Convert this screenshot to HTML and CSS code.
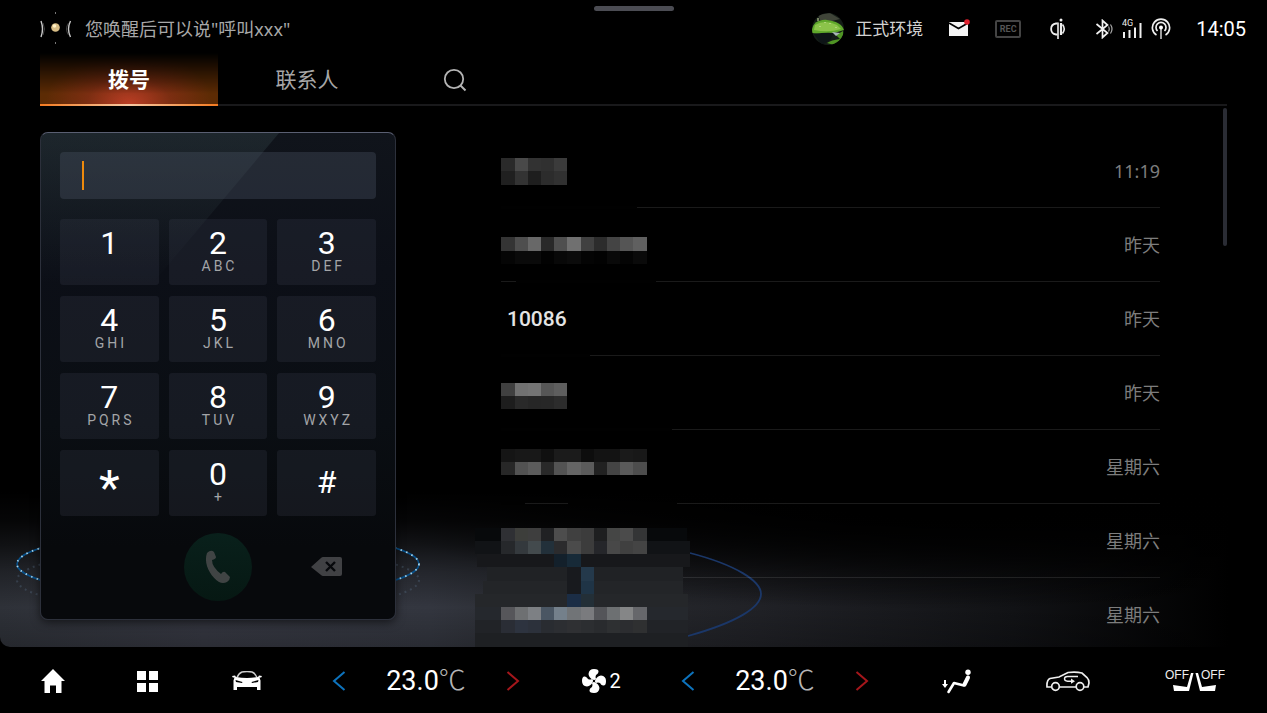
FILE: index.html
```html
<!DOCTYPE html>
<html lang="zh-CN">
<head>
<meta charset="utf-8">
<meta name="viewport" content="width=device-width, initial-scale=1">
<title>拨号</title>
<link rel="stylesheet" href="styles.css">
</head>
<body>
<div class="stage">
  <svg class="rings" width="800" height="160" viewBox="0 487 800 160" aria-hidden="true">
    <g fill="none">
      <ellipse cx="218" cy="580" rx="201" ry="33" stroke="#52677c" stroke-opacity=".4" stroke-width="2" stroke-dasharray="2 4"/>
      <ellipse cx="218" cy="564" rx="201" ry="34" stroke="#07508a" stroke-width="1.600"/>
      <ellipse cx="218" cy="564" rx="201" ry="34" stroke="#a9d3e8" stroke-width="1.800" stroke-dasharray="1.500 4.500"/>
      <path d="M690 553C736 565 761 581 761 594S738 622 688 636" stroke="#1b3768" stroke-width="1.800"/>
    </g>
  </svg>
  <span class="handle"></span>

  <header class="status">
    <svg class="voice" width="32" height="34" viewBox="0 0 32 34" aria-hidden="true">
      <path d="M1 9q3 8 0 16" fill="none" stroke="#c9c9c9" stroke-width="1.400"/>
      <path d="M3 11q3 6 0 12" fill="none" stroke="#444" stroke-width="1"/>
      <path d="M30.500 9q-4 8 0 16" fill="none" stroke="#c9c9c9" stroke-width="1.400"/>
      <path d="M28.500 11q-4 6 0 12" fill="none" stroke="#444" stroke-width="1"/>
      <circle cx="15.500" cy="15.500" r="4.300" fill="#d8bd86"/><circle cx="14.500" cy="14" r="1.800" fill="#fff0c4"/>
      <path d="M15 0h1v2h-1zM15 30h1v2h-1z" fill="#777"/>
    </svg>
    <p class="hint">您唤醒后可以说"呼叫xxx"</p>
    <div class="profile">
      <svg width="32" height="32" viewBox="0 0 32 32" role="img" aria-label="头像">
        <clipPath id="face"><circle cx="16" cy="16" r="16"/></clipPath>
        <g clip-path="url(#face)">
          <path fill="#141c17" d="M0 0h32v32H0z"/>
          <path fill="#3f4438" d="M6 2L18 0l10 6-8 2-12-1z"/>
          <path fill="#5fa72b" d="M0 20C-1 11 6 6 15 7s15 4 17 10l-10 3-12 1z"/>
          <path fill="#8bc34a" d="M3 12q10-6 22 0l4 4q-12 4-27 1z"/>
          <path fill="#0d1416" d="M2 21q12-2 20-1l-4 7-8 5z"/>
          <path fill="#4f9424" d="M15 30q4-3 13-4l-4-4 7-4 1 9-10 5z"/>
          <path d="M20 19l8 1-4 3z" fill="#a8b3b8"/>
          <path d="M6 5v3M13 9v1M8 13v1M18 10v1M24 14v1" stroke="#d5e8a8"/>
        </g>
      </svg>
      <span>正式环境</span>
    </div>
    <svg class="mail" width="22" height="20" viewBox="0 0 22 20" role="img" aria-label="消息">
      <path fill="#f4f4f4" d="M1 3h19v14H1z"/><path d="M1 4l9.500 5.500L20 4" fill="none" stroke="#000" stroke-width="1.600"/>
      <circle cx="19" cy="3" r="2.800" fill="#e0202e"/>
    </svg>
    <span class="rec">REC</span>
    <svg width="24" height="22" viewBox="0 0 24 22" role="img" aria-label="无线充电">
      <g fill="none" stroke="#eee"><path d="M11.500 5.500H10C3.500 6.500 3.500 15.500 10 16.500h1.500" stroke-width="1.800"/><path d="M12 4.500V21" stroke-width="1.600"/><path d="M15 5v12" stroke-width="2.200"/><path d="M16.500 6.500q3.500 4.500 0 9" stroke-width="1.600"/></g>
      <circle cx="15" cy="2" r="1.500" fill="#eee"/>
    </svg>
    <div class="signals">
      <svg width="18" height="20" viewBox="0 0 18 20" role="img" aria-label="蓝牙">
        <path d="M1.500 5l11 9-5 4.500V1.500l5 4.500-11 9" fill="none" stroke="#f2f2f2" stroke-width="1.700"/>
        <path d="M13.500 7.500q1.500 2.500 0 5M15.500 5.500q3 4.500 0 9" fill="none" stroke="#aaa" stroke-width="1.200"/>
      </svg>
      <svg width="20" height="20" viewBox="0 0 20 20" role="img" aria-label="4G">
        <text x="0" y="7" class="net">4G</text>
        <path d="M2 13v6M7.500 11v8M13 8.500V19M18.500 4v15" stroke="#eee" stroke-width="2"/>
      </svg>
      <svg width="20" height="22" viewBox="0 0 20 22" role="img" aria-label="热点">
        <g fill="none" stroke="#eee" stroke-width="1.700"><path d="M5.500 17A8.600 8.600 0 1 1 14.500 17"/><path d="M6.500 13A5 5 0 1 1 13.500 13"/><path d="M10 10v11" stroke="#bbb"/></g>
        <circle cx="10" cy="9.500" r="2" fill="#fff"/>
      </svg>
    </div>
    <time class="clock">14:05</time>
  </header>

  <nav class="tabs">
    <button class="tab tab-active" type="button">拨号</button>
    <button class="tab" type="button">联系人</button>
    <button class="tab tab-search" type="button" aria-label="搜索">
      <svg width="24" height="24" viewBox="0 0 24 24"><circle cx="11" cy="11" r="9.200" fill="none" stroke="#b4b4b4" stroke-width="1.800"/><path d="M17.500 17.500l5 5" stroke="#b4b4b4" stroke-width="2"/></svg>
    </button>
  </nav>

  <main class="content">
    <section class="dialer" aria-label="拨号盘">
      <label class="number"><input class="number-input" type="tel" aria-label="号码"><span class="caret"></span></label>
      <div class="keys">
        <button class="key" type="button">1</button>
        <button class="key" type="button">2<small>ABC</small></button>
        <button class="key" type="button">3<small>DEF</small></button>
        <button class="key" type="button">4<small>GHI</small></button>
        <button class="key" type="button">5<small>JKL</small></button>
        <button class="key" type="button">6<small>MNO</small></button>
        <button class="key" type="button">7<small>PQRS</small></button>
        <button class="key" type="button">8<small>TUV</small></button>
        <button class="key" type="button">9<small>WXYZ</small></button>
        <button class="key key-star" type="button">*</button>
        <button class="key" type="button">0<small>+</small></button>
        <button class="key key-hash" type="button">#</button>
      </div>
      <div class="actions">
        <button class="call" type="button" aria-label="呼叫">
          <svg width="26" height="34" viewBox="0 0 26 34"><path fill="#404444" d="M2 3Q6-1 9 2l2 5q0 2-4 3 0 7 9 14 2-3 4-2l5 5q0 3-3 5-4 2-8 0C6 27-2 14 2 3z"/></svg>
        </button>
        <button class="erase" type="button" aria-label="删除">
          <svg width="32" height="20" viewBox="0 0 32 20"><path fill="#404144" d="M0 10L10 1q1-1 2-1h17q2 0 2 2v15q0 2-2 2H12q-1 0-2-1z"/><path d="M15 5l9 9M24 5l-9 9" stroke="#07090c" stroke-width="2.400"/></svg>
        </button>
      </div>
    </section>

    <section class="log" aria-label="通话记录">
      <ul class="calls">
        <li class="entry"><time>11:19</time></li>
        <li class="entry"><time>昨天</time></li>
        <li class="entry"><span class="caller">10086</span><time>昨天</time></li>
        <li class="entry"><time>昨天</time></li>
        <li class="entry"><time>星期六</time></li>
        <li class="entry"><time>星期六</time></li>
        <li class="entry"><time>星期六</time></li>
      </ul>
      <svg class="mosaic" width="230" height="502" viewBox="471 145 230 502" aria-hidden="true"></svg>
    </section>
    <span class="scrollbar"></span>
  </main>
</div>

<footer class="dock">
  <button class="dock-item" type="button" aria-label="主页"><svg width="24" height="24" viewBox="0 0 24 24"><path fill="#fff" d="M12 0l12 12h-3.500v12H15v-7.500H9V24H3.500V12H0z"/></svg></button>
  <button class="dock-item" type="button" aria-label="应用"><svg width="21" height="21" viewBox="0 0 21 21"><path fill="#fff" d="M0 0h9v9H0zM12 0h9v9h-9zM0 12h9v9H0zM12 12h9v9h-9z"/></svg></button>
  <button class="dock-item" type="button" aria-label="车辆"><svg width="30" height="20" viewBox="0 0 30 20"><path d="M5 6.500Q7 2 10 1q5-.8 10 0 3 1 5 5.500" fill="none" stroke="#ccc" stroke-width="1.500"/><path fill="#fff" d="M0 5l3-.5 1 1.500q11 2 22 0l1-1.500 3 .5-.8 1.500H27.500l1 3v9.500H25V16H5v3H1.500V9.500l1-3H.8z"/><path fill="#000" d="M3.500 9l7 2-.5 1-6-1zM26.500 9l-7 2 .5 1 6-1z"/></svg></button>
  <div class="dock-item climate">
    <button class="step" type="button" aria-label="降温"><svg width="14" height="20" viewBox="0 0 14 20"><path d="M12.500 1L2 10l10.500 9" fill="none" stroke="#0d73bd" stroke-width="2"/></svg></button>
    <span class="temp">23.0<span class="unit">℃</span></span>
    <button class="step" type="button" aria-label="升温"><svg width="14" height="20" viewBox="0 0 14 20"><path d="M1.500 1L12 10 1.500 19" fill="none" stroke="#a5161b" stroke-width="2"/></svg></button>
  </div>
  <button class="dock-item fan" type="button" aria-label="风量 2"><svg width="24" height="24" viewBox="-12 -12 24 24"><g fill="#fff"><path id="blade" d="M-.5-1Q-5-3-5.500-7-5-12 0-12q5 0 4.500 3Q4-7 2-6 1-4 2-2L0 0z"/><use href="#blade" transform="rotate(90)"/><use href="#blade" transform="rotate(180)"/><use href="#blade" transform="rotate(270)"/></g><circle r="1.200"/></svg><span>2</span></button>
  <div class="dock-item climate">
    <button class="step" type="button" aria-label="降温"><svg width="14" height="20" viewBox="0 0 14 20"><path d="M12.500 1L2 10l10.500 9" fill="none" stroke="#0d73bd" stroke-width="2"/></svg></button>
    <span class="temp">23.0<span class="unit">℃</span></span>
    <button class="step" type="button" aria-label="升温"><svg width="14" height="20" viewBox="0 0 14 20"><path d="M1.500 1L12 10 1.500 19" fill="none" stroke="#a5161b" stroke-width="2"/></svg></button>
  </div>
  <button class="dock-item" type="button" aria-label="吹脚"><svg width="30" height="25" viewBox="0 0 30 25"><circle cx="26" cy="3.200" r="2.700" fill="#fff"/><path d="M26 8l-4 8.500L12 14 6.500 23" fill="none" stroke="#fff" stroke-width="2.600" stroke-linecap="round" stroke-linejoin="round"/><path d="M26 8.500l-3.500 7" stroke="#fff" stroke-width="4" stroke-linecap="round"/><path fill="#fff" d="M2 11h2v4h2l-3 4-3-4h2z"/></svg></button>
  <button class="dock-item" type="button" aria-label="内循环"><svg width="44" height="21" viewBox="0 0 44 21"><g fill="none" stroke="#eee" stroke-width="1.700"><path d="M5 16H1q-.5-7 3-8.500L13 6l9-4.500q8-1 14 .5l5 4.500q2 2 2 5.500l-1 4H38M30 16H13"/><circle cx="9.500" cy="15.500" r="3.800"/><circle cx="34" cy="15.500" r="3.800"/><path d="M32 5.500H21.500q-3 0-3 2.300t3 2.400H26" stroke-width="1.400"/></g><path fill="#eee" d="M25 7.500l4 2.700-4 2.500z"/></svg></button>
  <button class="dock-item" type="button" aria-label="座椅加热 关">
    <svg width="60" height="22" viewBox="0 0 60 22"><text class="off" x="0" y="9">OFF</text><text class="off" x="36" y="9">OFF</text><path fill="#fff" d="M8 15l14 2L26 3h2.500L24 21H9zM51 15l-14 2L33 3h-2.500L35 21h15z"/></svg>
  </button>
</footer>
<script src="mosaic.js"></script>
</body>
</html>
```

FILE: styles.css
```css
* {
  box-sizing: border-box;
}

body {
  margin: 0;
  min-height: 100vh;
  display: flex;
  flex-direction: column;
  background: #000;
  color: #fff;
  font-family: Roboto, "Noto Sans CJK SC", sans-serif;
}

button {
  padding: 0;
  border: 0;
  background: none;
  color: inherit;
  font: inherit;
}

svg {
  display: block;
  flex: none;
}

.stage {
  position: relative;
  flex: 1;
  display: flex;
  flex-direction: column;
  overflow: hidden;
  border-radius: 0 0 10px 10px;
  background:
    linear-gradient(to top, rgba(0, 0, 0, .2), transparent 40px, rgba(0, 0, 0, .3) 75px, rgba(0, 0, 0, .65) 102px, rgba(0, 0, 0, .88) 126px, #000 155px),
    radial-gradient(ellipse 620px 130px at 75% 480px, #000 30%, transparent),
    linear-gradient(90deg, #2e3138, #363842 16%, #33363f 34%, #282a2f 45%, #202126 60%, #111215 80%, #000 97%);
}

.rings {
  position: absolute;
  left: 0;
  bottom: 0;
}

.handle {
  position: absolute;
  top: 6px;
  left: 50%;
  width: 80px;
  height: 5px;
  margin-left: -40px;
  border-radius: 3px;
  background: #4b4c53;
}

.status {
  height: 53px;
  padding: 4px 21px 0 40px;
  display: flex;
  align-items: center;
  gap: 25px;
}

.voice {
  margin-right: -12px;
}

.hint {
  flex: 1;
  margin: 0;
  color: #a8a8a8;
  font-family: "Noto Sans", "Noto Sans CJK SC", sans-serif;
  font-size: 18px;
  line-height: 24px;
}

.profile {
  display: flex;
  align-items: center;
  gap: 11px;
  color: #d2d2d2;
  font-size: 17px;
  line-height: 20px;
}

.rec {
  width: 26px;
  height: 18px;
  border: 2px solid #444;
  border-radius: 2px;
  color: #555;
  font-size: 9px;
  font-weight: 700;
  line-height: 14px;
  text-align: center;
}

.signals {
  display: flex;
  align-items: center;
  gap: 9px;
}

.net {
  fill: #eee;
  font: 9px Roboto, sans-serif;
}

.clock {
  font-size: 20px;
}

.tabs {
  height: 53px;
  margin: 0 40px;
  display: flex;
  border-bottom: 2px solid #19191b;
}

.tab {
  width: 178px;
  margin-bottom: -2px;
  padding-bottom: 4px;
  color: #a6a6a6;
  font-size: 21px;
}

.tab-active {
  padding-bottom: 2px;
  border-bottom: 2px solid;
  border-image: linear-gradient(90deg, #f47a20, #f6c9a4 50%, #f47a20) 1;
  background:
    linear-gradient(#000, transparent 80%),
    radial-gradient(ellipse 84px 54px at 50% 100%, #bb3e25, rgba(150, 48, 28, .55) 50%, transparent),
    #5c2b04;
  color: #fff;
  font-weight: 700;
}

.tab-search {
  width: 118px;
  padding-bottom: 0;
  display: flex;
  align-items: center;
  justify-content: center;
}

.content {
  flex: 1;
  display: flex;
  padding: 0 40px 0 40px;
}

.dialer {
  position: relative;
  width: 356px;
  margin: 26px 0 27px;
  padding: 19px 19px 16px;
  border: 1px solid #2c303b;
  border-top-color: #5a5f72;
  border-radius: 8px;
  background: linear-gradient(#10141b, #0c0f17 28%, #0a0e13 60%, #07090c 85%);
  box-shadow: 0 2px 10px rgba(0, 0, 0, .6);
}

.dialer::before {
  content: "";
  position: absolute;
  inset: 0 0 auto 0;
  height: 150px;
  border-radius: 7px 0 0 0;
  background: linear-gradient(rgba(60, 80, 84, .3), rgba(50, 60, 70, 0));
  clip-path: polygon(0 0, 238px 0, 112px 100%, 0 100%);
}

.number {
  position: relative;
  display: block;
}

.number-input {
  display: block;
  width: 100%;
  height: 47px;
  padding: 0 24px;
  border: 0;
  border-radius: 4px;
  outline: 0;
  background: rgba(76, 84, 100, .36);
  color: #fff;
  font-size: 24px;
}

.caret {
  position: absolute;
  top: 9px;
  left: 22px;
  width: 2px;
  height: 29px;
  background: #ee8a0c;
}

.keys,
.actions {
  position: relative;
  display: grid;
  grid-template-columns: repeat(3, 1fr);
  gap: 11px 10px;
  margin-top: 20px;
}

.key {
  height: 66px;
  padding-top: 8px;
  display: flex;
  flex-direction: column;
  align-items: center;
  border-radius: 3px;
  background: rgba(62, 68, 84, .24);
  font-size: 32px;
  line-height: 32px;
}

.key small {
  padding-left: 3px;
  color: #a3a5a8;
  font-size: 14px;
  line-height: 14px;
  letter-spacing: 3px;
}

.key-star {
  padding-top: 14px;
  font-size: 48px;
  line-height: 48px;
}

.key-hash {
  padding-top: 16px;
}

.actions {
  margin-top: 17px;
  align-items: center;
  justify-items: center;
}

.call {
  grid-column: 2;
  width: 68px;
  height: 68px;
  display: flex;
  align-items: center;
  justify-content: center;
  border-radius: 50%;
  background: linear-gradient(#09201b, #061813);
}

.log {
  position: relative;
  flex: 1;
  margin: 28px 63px 0 105px;
}

.calls {
  margin: 0;
  padding: 0;
  list-style: none;
}

.entry {
  height: 74px;
  padding-left: 6px;
  display: flex;
  align-items: center;
  border-bottom: 1px solid rgba(255, 255, 255, .1);
}

.entry:last-child {
  height: 66px;
  padding-top: 7px;
  border-bottom: 0;
}

.entry time {
  margin-left: auto;
  color: #7d7d7d;
  font-family: "Noto Sans", "Noto Sans CJK SC", sans-serif;
  font-size: 18px;
  line-height: 24px;
}

.caller {
  color: #e4e4e4;
  font-size: 21px;
  font-weight: 500;
}

.mosaic {
  position: absolute;
  top: 11px;
  left: -30px;
}

.scrollbar {
  width: 4px;
  height: 138px;
  margin-top: 2px;
  border-radius: 2px;
  background: #2a2c34;
}

.dock {
  flex: none;
  height: 66px;
  padding: 2px 0 0 4px;
  display: grid;
  grid-template-columns: 97fr 92fr 107fr 252fr 99fr 248fr 115fr 108fr 145fr;
  align-items: center;
}

.dock-item {
  display: flex;
  align-items: center;
  justify-content: center;
}

.climate {
  gap: 40px;
}

.temp {
  display: flex;
  align-items: center;
  font-size: 27px;
  line-height: 32px;
}

.unit {
  color: #b5b5b5;
  font-weight: 300;
}

.fan {
  gap: 3px;
  font-size: 20px;
}

.off {
  fill: #eee;
  font: 12px "Liberation Sans", sans-serif;
}
```

FILE: mosaic.js
```js
const svg = document.querySelector(".mosaic");
const CELL = 13.2;
const LEFT = 501.4;

function rect(x, y, width, height, fill) {
  const node = document.createElementNS("http://www.w3.org/2000/svg", "rect");
  Object.entries({ x, y, width, height, fill }).forEach(([k, v]) => node.setAttribute(k, v));
  svg.append(node);
}

// Blanked divider segments: x, y, width
[
  [501, 206, 136], [516, 280, 140], [501, 354, 89],
  [501, 428, 171], [501, 502, 24], [568, 502, 109]
].forEach(([x, y, w]) => rect(x, y, w, 3, "#010101"));

// Shaded bands behind the lower names: x, y, width, height, fill
[
  [475, 528, 212, 13, "#07090b"], [475, 541, 215, 13, "#111316"],
  [477, 554, 213, 13, "#17181b"], [487, 567, 196, 14, "#202225"],
  [483, 581, 200, 13, "#232528"], [475, 594, 213, 13, "#25272a"],
  [475, 607, 213, 13, "#25282d"], [475, 620, 213, 13, "#212327"],
  [475, 633, 213, 14, "#1e2023"],
  [554, 554, 13, 13, "#13202b"], [567, 554, 14, 13, "#172a38"],
  [567, 567, 14, 27, "#181a1e"], [581, 567, 13, 14, "#24394b"],
  [581, 581, 13, 13, "#1f3446"], [567, 594, 14, 13, "#1b2d45"],
  [581, 594, 13, 13, "#232f37"]
].forEach((band) => rect(...band));

// Cell rows: top, height, colours from left to right
[
  [158, 13, "2a2a2a 494949 323232 303030 3b3b3b"],
  [171, 14, "202020 333333 1e1e1e 2c2c2c 313131"],
  [237, 14, "343434 4e4e4e 686868 292929 4f4f4f 707070 404040 2c2c2c 444444 555555 606060"],
  [251, 13, "050505 0a0a0a 0a0a0a 020202 080808 0b0b0b 040404 020202 090909 040404 0a0a0a"],
  [383, 13, "404040 717171 747474 565656 5e5e5e"],
  [396, 13, "1d1d1d 292929 262626 272727 2c2c2c"],
  [449, 13, "151515 181818 181818 101010 1b1b1b 1b1b1b 0d0d0d 131313 131313 1a1a1a 181818"],
  [462, 13, "272727 525252 5c5c5c 292929 535353 656565 5b5b5b 212121 444444 5a5a5a 4d4d4d"],
  [528, 13, "2f3034 3d3e3b 3e3e3e 202123 4d4d4d 404040 3c3c3c 1e1f20 454645 4b4b4b 343536"],
  [541, 13, "26282b 34393d 434a4d 22303a 2b2b2d 4b4b4b 3c3c3c 25262a 484848 404040 444444"],
  [607, 13, "56565a 6e7072 7d8084 4a5663 74808b 717477 7a7b7e 545559 6d7072 858687 66676b"],
  [620, 13, "2a2d35 2d333f 2c313b 292c31 2c2e32 2f3033 2c2e31 292b2e 2e3032 2c2d30 2f3031"]
].forEach(([y, height, colours]) => {
  colours.split(" ").forEach((colour, i) => {
    const x = Math.round(LEFT + i * CELL);
    rect(x, y, Math.round(LEFT + (i + 1) * CELL) - x, height, "#" + colour);
  });
});
```
